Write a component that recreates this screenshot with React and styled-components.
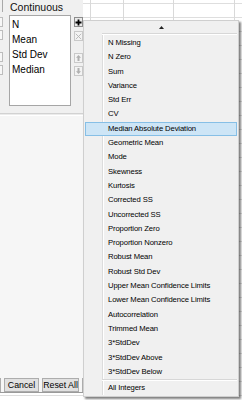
import styled, { createGlobalStyle } from "styled-components"

const GlobalStyle = createGlobalStyle`
  html, body {
    margin: 0;
    padding: 0;
  }
  body {
    width: 242px;
    height: 400px;
    overflow: hidden;
    background: #fff;
    font-family: "Liberation Sans", Arial, sans-serif;
  }
`;

const Screen = styled.div`
  position: relative;
  width: 242px;
  height: 400px;
  overflow: hidden;
  background:
    linear-gradient(#d9d9d9, #d9d9d9) 90px 0 / 1px 20px no-repeat,
    linear-gradient(#d9d9d9, #d9d9d9) 123px 0 / 1px 20px no-repeat,
    linear-gradient(#d9d9d9, #d9d9d9) 173px 0 / 1px 20px no-repeat,
    linear-gradient(#d9d9d9, #d9d9d9) 234px 0 / 1px 20px no-repeat,
    repeating-linear-gradient(to bottom, transparent 0 3px, #dedede 3px 4px, transparent 4px 14px) 0 0 / 100% 100%,
    #fff;
`;

const Dialog = styled.div`
  width: 83px;
  height: 392px;
  background: #f6f6f6;
  border-bottom: 1px solid #9a9a9a;
  display: flex;
  flex-direction: column;
  overflow: hidden;
`;

const Panel = styled.div`
  display: flex;
  height: 113px;
  background: #f0f0f0;
`;

const StubCol = styled.div`
  width: 3px;
  display: flex;
  flex-direction: column;
  margin-right: 6px;
`;

const StubLine = styled.div`
  width: 3px;
  height: 12px;
  border-right: 1px solid #a9a9a9;
  box-sizing: border-box;
`;

const StubBox = styled.div`
  width: 3px;
  height: 10px;
  margin-top: ${p => p.$gap}px;
  border: 1px solid #bdbdbd;
  border-left: none;
  box-sizing: border-box;
  background: #f7f7f7;
`;

const MainCol = styled.div`
  width: 62px;
  display: flex;
  flex-direction: column;
`;

const Title = styled.div`
  height: 15px;
  line-height: 15px;
  padding-left: 1px;
  font-size: 10.5px;
  color: #111;
`;

const ListBox = styled.div`
  height: 91px;
  box-sizing: border-box;
  border: 1px solid #a6a6a6;
  background: #fff;
  padding: 1px 2px;
`;

const ListItem = styled.div`
  height: 15px;
  line-height: 15px;
  font-size: 10px;
  color: #000;
  white-space: nowrap;
`;

const ToolCol = styled.div`
  width: 9px;
  margin-left: 3px;
  display: flex;
  flex-direction: column;
  padding-top: 17px;
`;

const Tool = styled.div`
  width: 9px;
  height: 10px;
  margin-top: ${p => p.$gap || 0}px;
  box-sizing: border-box;
  border: 1px solid ${p => (p.$active ? "#8c8c8c" : "#c9c9c9")};
  background: ${p => (p.$active ? "#e9e9e9" : "#f3f3f3")};
  display: flex;
  align-items: center;
  justify-content: center;
`;

const Separator = styled.div`
  height: 1px;
  border-top: 1px solid #d2d2d2;
  border-bottom: 1px solid #fff;
  background: #ebebeb;
`;

const Spacer = styled.div`
  flex: 1;
`;

const ButtonRow = styled.div`
  display: flex;
  gap: 3px;
  margin-left: -29px;
  height: 14px;
`;

const Button = styled.div`
  flex: none;
  width: ${p => p.$w}px;
  height: 14px;
  box-sizing: border-box;
  border: 1px solid #adadad;
  background: #e1e1e1;
  font-size: 8.8px;
  line-height: 12px;
  text-align: center;
  color: #000;
  white-space: nowrap;
`;

const Menu = styled.div`
  position: absolute;
  left: 83px;
  top: 20px;
  width: 156px;
  height: 377px;
  box-sizing: border-box;
  border: 1px solid #cfcfcf;
  background: #f0f0f0;
  box-shadow: 2px 2px 2px rgba(0, 0, 0, 0.5);
  padding: 0 1px;
  display: flex;
  flex-direction: column;
`;

const ScrollUp = styled.div`
  height: 12px;
  display: flex;
  align-items: center;
  justify-content: center;
  padding-top: 1px;
  box-sizing: border-box;
`;

const MenuRule = styled.div`
  margin-left: 17px;
  height: 0;
  border-top: 1px solid #d7d7d7;
  border-bottom: 1px solid #fff;
`;

const ItemList = styled.div`
  padding-top: 1px;
  background: linear-gradient(to right, transparent 17px, #dcdcdc 17px, #dcdcdc 18px, #fff 18px, #fff 19px, transparent 19px);
`;

const Item = styled.div`
  height: 14.3px;
  box-sizing: border-box;
  padding-left: 22px;
  font-size: 7.7px;
  line-height: 12.3px;
  letter-spacing: -0.12px;
  color: #000;
  white-space: nowrap;
  border: 1px solid ${p => (p.$selected ? "#86bfe6" : "transparent")};
  background: ${p => (p.$selected ? "#cde5f6" : "transparent")};
`;

const stats = [
  "N Missing",
  "N Zero",
  "Sum",
  "Variance",
  "Std Err",
  "CV",
  "Median Absolute Deviation",
  "Geometric Mean",
  "Mode",
  "Skewness",
  "Kurtosis",
  "Corrected SS",
  "Uncorrected SS",
  "Proportion Zero",
  "Proportion Nonzero",
  "Robust Mean",
  "Robust Std Dev",
  "Upper Mean Confidence Limits",
  "Lower Mean Confidence Limits",
  "Autocorrelation",
  "Trimmed Mean",
  "3*StdDev",
  "3*StdDev Above",
  "3*StdDev Below",
];

const PlusIcon = () => (
  <svg width="7" height="7" viewBox="0 0 7 7">
    <path d="M3.5 0.5v6M0.5 3.5h6" stroke="#000" strokeWidth="1.8" />
  </svg>
);

const CrossIcon = () => (
  <svg width="7" height="7" viewBox="0 0 7 7">
    <path d="M0.8 0.8l5.4 5.4M6.2 0.8l-5.4 5.4" stroke="#b4b4b4" strokeWidth="0.9" />
  </svg>
);

const ArrowIcon = ({ down }) => (
  <svg width="5" height="6" viewBox="0 0 5 6" style={down ? { transform: "rotate(180deg)" } : undefined}>
    <path d="M2.5 0L5 2.8H3.5V6H1.5V2.8H0z" fill="#b0b0b0" />
  </svg>
);

const App = () => {
  return (
    <Screen>
      <GlobalStyle />
      <Dialog>
        <Panel>
          <StubCol>
            <StubLine />
            <StubBox $gap={5} />
            <StubBox $gap={3} />
            <StubBox $gap={12} />
            <StubBox $gap={3} />
          </StubCol>
          <MainCol>
            <Title>Continuous</Title>
            <ListBox>
              <ListItem>N</ListItem>
              <ListItem>Mean</ListItem>
              <ListItem>Std Dev</ListItem>
              <ListItem>Median</ListItem>
            </ListBox>
          </MainCol>
          <ToolCol>
            <Tool $active>
              <PlusIcon />
            </Tool>
            <Tool $gap={4}>
              <CrossIcon />
            </Tool>
            <Tool $gap={12}>
              <ArrowIcon />
            </Tool>
            <Tool $gap={3}>
              <ArrowIcon down />
            </Tool>
          </ToolCol>
        </Panel>
        <Separator />
        <Spacer />
        <ButtonRow>
          <Button $w={30} />
          <Button $w={35}>Cancel</Button>
          <Button $w={37}>Reset All</Button>
          <Button $w={30} />
        </ButtonRow>
      </Dialog>
      <Menu>
        <ScrollUp>
          <svg width="5" height="3" viewBox="0 0 5 3">
            <path d="M2.5 0L5 3H0z" fill="#222" />
          </svg>
        </ScrollUp>
        <MenuRule />
        <ItemList>
          {stats.map(s => (
            <Item key={s} $selected={s === "Median Absolute Deviation"}>
              {s}
            </Item>
          ))}
          <MenuRule />
          <Item>All Integers</Item>
        </ItemList>
      </Menu>
    </Screen>
  )
}

export default App
